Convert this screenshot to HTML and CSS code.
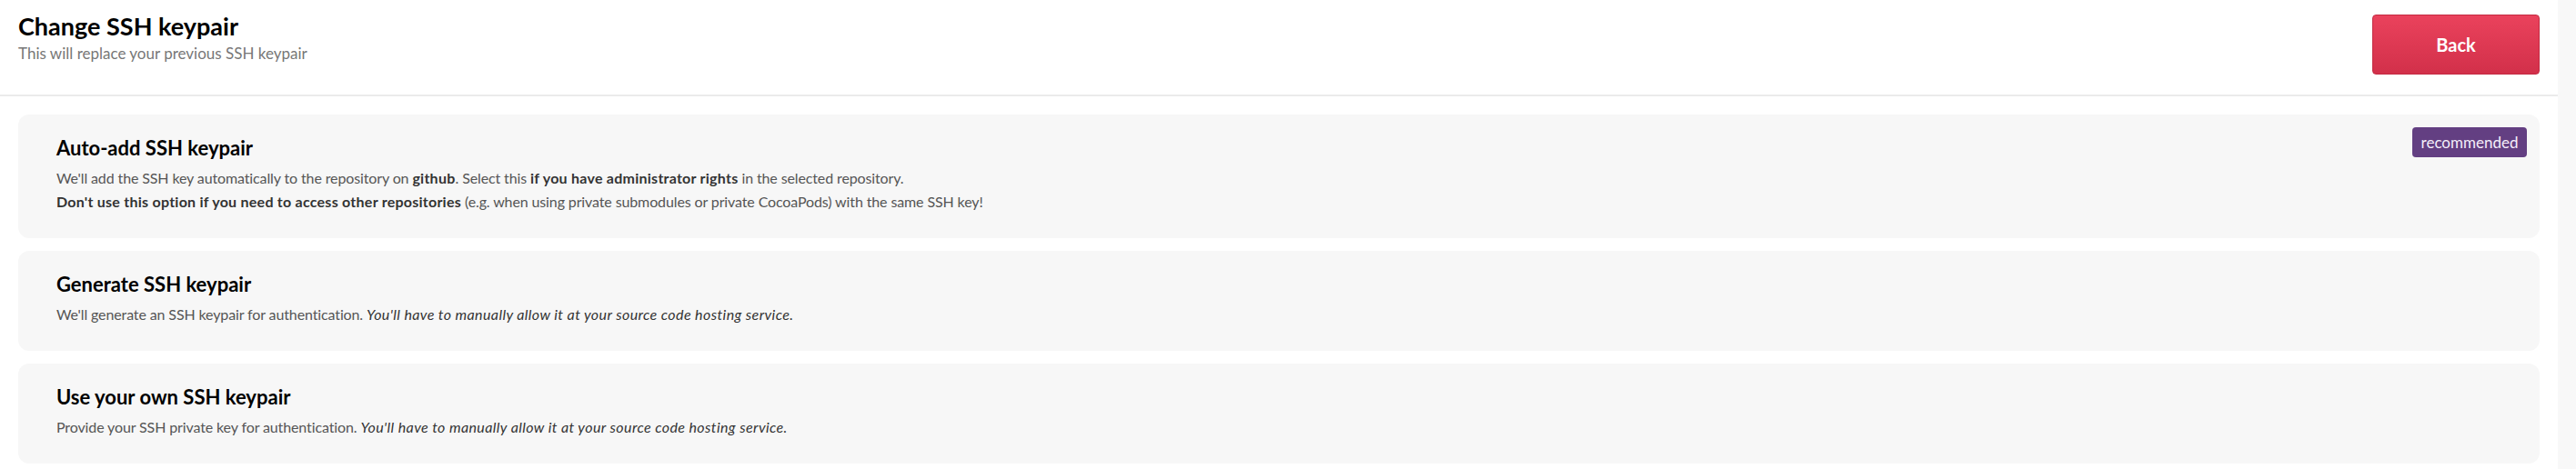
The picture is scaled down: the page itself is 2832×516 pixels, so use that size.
FILE: index.html
```html
<!DOCTYPE html>
<html>
<head>
<meta charset="utf-8">
<link rel="stylesheet" href="styles.css">
</head>
<body>
<div class="page">
  <div class="main">
    <header class="header">
      <div class="heading">
        <h1 class="title">Change SSH keypair</h1>
        <p class="subtitle">This will replace your previous SSH keypair</p>
      </div>
      <button class="back">Back</button>
    </header>
    <div class="options">
      <div class="card">
        <span class="badge">recommended</span>
        <h2 class="card-title">Auto-add SSH keypair</h2>
        <p class="card-text">We'll add the SSH key automatically to the repository on <b>github</b>. Select this <b>if you have administrator rights</b> in the selected repository.</p>
        <p class="card-text"><b>Don't use this option if you need to access other repositories</b> (e.g. when using private submodules or private CocoaPods) with the same SSH key!</p>
      </div>
      <div class="card">
        <h2 class="card-title">Generate SSH keypair</h2>
        <p class="card-text">We'll generate an SSH keypair for authentication. <i>You'll have to manually allow it at your source code hosting service.</i></p>
      </div>
      <div class="card">
        <h2 class="card-title">Use your own SSH keypair</h2>
        <p class="card-text">Provide your SSH private key for authentication. <i>You'll have to manually allow it at your source code hosting service.</i></p>
      </div>
    </div>
  </div>
  <div class="track"></div>
</div>
</body>
</html>
```
FILE: styles.css
```css
* { box-sizing: border-box; }
html, body { margin: 0; padding: 0; background: #fff; }
body { font-family: Lato, "Noto Sans", sans-serif; color: #000; }
.page { display: flex; min-height: 516px; }
.main { flex: 1; min-width: 0; }
.track { width: 20px; background: #f8f8f8; flex: none; }
.header {
  display: flex;
  justify-content: space-between;
  align-items: flex-start;
  padding: 13px 20px 0 20px;
  height: 106px;
  border-bottom: 2px solid #ebebeb;
}
.title { margin: 0; font-size: 27px; line-height: 32px; font-weight: 700; }
.subtitle { margin: 4px 0 0; font-size: 17px; line-height: 20px; color: #777; }
.back {
  margin-top: 3px;
  width: 184px;
  height: 66px;
  border: 1px solid #c42a42;
  border-radius: 4px;
  background: linear-gradient(#ea425c, #d2304a);
  color: #fff;
  font-family: inherit;
  font-size: 20px;
  font-weight: 700;
  padding: 0;
}
.options { padding: 20px 20px 0 20px; display: flex; flex-direction: column; gap: 14px; }
.card {
  position: relative;
  background: #f7f7f7;
  border-radius: 12px;
  padding: 24px 42px 29px;
}
.badge {
  position: absolute;
  top: 14px;
  right: 14px;
  width: 126px;
  height: 33px;
  background: #633f82;
  color: #f4eefa;
  border-radius: 4px;
  font-size: 17px;
  line-height: 33px;
  text-align: center;
}
.card-title { margin: 0 0 8px; font-size: 22px; line-height: 26px; font-weight: 700; }
.card-text { margin: 0; font-size: 16px; line-height: 23px; color: #555; letter-spacing: -0.12px; }
.card-text + .card-text { margin-top: 3px; }
.card-text b { color: #333; letter-spacing: 0.25px; }
.card-text i { color: #333; letter-spacing: 0.4px; }
```
